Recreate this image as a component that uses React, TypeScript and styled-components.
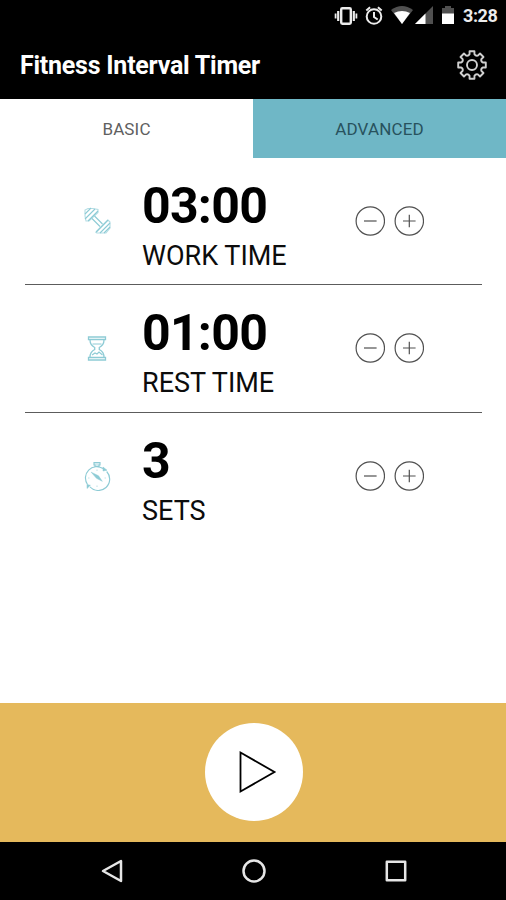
import React from 'react';
import styled, { createGlobalStyle } from 'styled-components';

const GlobalStyle = createGlobalStyle`
  * { box-sizing: border-box; }
  body { margin: 0; background: #fff; }
  button { border: 0; padding: 0; margin: 0; background: none; font: inherit; color: inherit; }
  svg { display: block; flex: none; }
`;

const Screen = styled.div`
  width: 506px;
  height: 900px;
  display: flex;
  flex-direction: column;
  overflow: hidden;
  background: #fff;
  font-family: Roboto, 'Liberation Sans', sans-serif;
  color: #000;
`;

const StatusBar = styled.div`
  height: 32px;
  flex: none;
  display: flex;
  justify-content: flex-end;
  align-items: center;
  padding-right: 9px;
  background: #000;
  color: #ececec;
`;

const Clock = styled.span`
  width: 34px;
  margin-left: 7px;
  font-size: 18px;
  line-height: 32px;
  font-weight: 700;
  letter-spacing: -0.4px;
  white-space: nowrap;
`;

const AppBar = styled.header`
  height: 67px;
  flex: none;
  display: flex;
  align-items: center;
  justify-content: space-between;
  padding: 0 18px 2px 20px;
  background: #000;
  color: #fff;
`;

const Title = styled.h1`
  margin: 2px 0 0;
  font-size: 25px;
  line-height: 30px;
  font-weight: 700;
  letter-spacing: -0.24px;
  white-space: nowrap;
`;

const Tabs = styled.nav`
  display: flex;
  height: 59px;
  flex: none;
`;

const Tab = styled.button<{ $filled?: boolean }>`
  flex: 1;
  font-size: 17px;
  line-height: 20px;
  letter-spacing: 0.15px;
  color: ${(p) => (p.$filled ? '#28525d' : '#606060')};
  background: ${(p) => (p.$filled ? '#6fb7c6' : '#fff')};
`;

const Settings = styled.main`
  flex: 1;
  padding: 0 24px 0 25px;
`;

const SettingRow = styled.section`
  height: 128px;
  display: grid;
  grid-template-columns: 117px 213px 1fr;
  border-bottom: 1px solid #5c5c5c;
  &:first-child { height: 127px; }
  &:last-child { border-bottom-color: transparent; }
`;

const IconCell = styled.div`
  padding: 48px 0 0 57px;
  color: #8dcbd5;
`;

const Reading = styled.div`
  padding-top: 19px;
`;

const Value = styled.div`
  font-size: 50px;
  line-height: 58px;
  font-weight: 700;
  letter-spacing: -0.75px;
`;

const Label = styled.div`
  margin-top: 4px;
  font-size: 27px;
  line-height: 34px;
  font-weight: 400;
  color: #0c0c0c;
  white-space: nowrap;
`;

const Stepper = styled.div`
  display: flex;
  gap: 9px;
  padding-top: 48px;
  align-items: flex-start;
  color: #505050;
`;

const StartPanel = styled.div`
  height: 139px;
  flex: none;
  display: flex;
  align-items: center;
  justify-content: center;
  padding: 0 0 1px 1px;
  background: #e5b95c;
`;

const PlayButton = styled.button`
  width: 98px;
  height: 98px;
  border-radius: 50%;
  background: #fff;
  display: flex;
  align-items: center;
  justify-content: center;
`;

const NavBar = styled.footer`
  height: 58px;
  flex: none;
  display: grid;
  grid-template-columns: repeat(3, 142px);
  justify-content: center;
  justify-items: center;
  align-items: center;
  padding-left: 1px;
  background: #000;
  color: #e6e6e6;
`;

const StatusIcons = () => (
  <svg width="122" height="32" viewBox="334 0 122 32" fill="none">
    <g stroke="#ececec">
      <rect x="341.2" y="8.2" width="9.6" height="15.6" rx="1.2" strokeWidth="2.4" />
      <path d="M338.2 11v10M353.8 11v10" strokeWidth="2.2" />
      <path d="M335.6 13.5v5M356.4 13.5v5" strokeWidth="1.8" />
      <circle cx="374" cy="16.5" r="7.3" strokeWidth="2" />
      <path d="M374 12v5l3.7 2.5M366.3 10.5l3.8-3.2M381.7 10.5l-3.8-3.2" strokeWidth="2" />
    </g>
    <path d="M391 10q11-8 22 0L402 24z" fill="#505050" />
    <path d="M394 13q8-4 16 0l-8 11z" fill="#fff" />
    <path d="M433 6v18h-18z" fill="#505050" />
    <path d="M425.5 13.5V24H415z" fill="#fff" />
    <path d="M442 8h3V6h6v2h3v6h-12z" fill="#505050" />
    <path d="M442 13.5h12V24h-12z" fill="#fff" />
  </svg>
);

const GEAR_TEETH = 8;

const gearPath = Array.from({ length: GEAR_TEETH }, (_, i) => {
  const point = (deg: number, r: number) => {
    const a = ((i * 360) / GEAR_TEETH + deg - 90) * (Math.PI / 180);
    return `${(16 + r * Math.cos(a)).toFixed(2)} ${(16 + r * Math.sin(a)).toFixed(2)}`;
  };
  return `${i ? 'L' : 'M'}${point(-10, 14)}L${point(10, 14)}L${point(13, 11)}Q${point(22.5, 9.5)} ${point(32, 11)}`;
}).join('') + 'Z';

const GearIcon = () => (
  <svg width="32" height="32" viewBox="0 0 32 32" fill="none" stroke="#d0d0d0" strokeWidth="1.9" strokeLinejoin="round">
    <path d={gearPath} />
    <circle cx="16" cy="16" r="5" />
  </svg>
);

const DumbbellIcon = () => (
  <svg width="30" height="30" viewBox="0 0 30 30" fill="none" stroke="currentColor" strokeWidth="1.1">
    <path d="M3 10V4l3-1.5h5l5 1v3L7 15H4zM14 26.5l12-12.5 2 2v6l-4 5h-9z" strokeOpacity=".65" />
    <path d="M3 8l6-6M3 13L13 3M6 15L16 5M14 26l12-12M18 27l10-10M22 27l6-6M12.5 10l8 8M10 12.5l8 8" />
  </svg>
);

const HourglassIcon = () => (
  <svg width="30" height="30" viewBox="0 0 30 30" fill="none" stroke="currentColor" strokeWidth="1.3">
    <path d="M6.5 4h17v2.5h-17zM6.5 24.5h17V27h-17zM8 7q0 5 4.7 7.5v2Q8 19 8 24M22 7q0 5-4.7 7.5v2Q22 19 22 24" />
    <path d="M10.5 11h9M10 22l3-2 2 1 2-2 3.5 3" strokeWidth="1.1" />
  </svg>
);

const StopwatchIcon = () => (
  <svg width="30" height="30" viewBox="0 0 30 30" fill="none" stroke="currentColor" strokeWidth="1.15">
    <path d="M5.5 23.5A11.3 11.3 0 0 1 21 7.6M24.7 10.5A11.3 11.3 0 0 1 8 25.8" />
    <path d="M13 5.5V4h-1V1.5h6V4h-1v1.5z" fill="currentColor" fillOpacity=".4" />
    <path d="M21 6l4 3.2-4 .8zM5 27.5v-4l3.4.8z" fill="currentColor" strokeWidth=".5" />
    <path d="M9.2 11.2l7.3 3.6 3.8 5.5-5.8-3z" fill="currentColor" strokeWidth=".5" />
    <path d="M15 8.5V10M24 17h-1.5M6 17h1.5M15 26v-1.5" strokeOpacity=".5" />
  </svg>
);

const StepIcon = ({ plus = false }: { plus?: boolean }) => (
  <svg width="30" height="30" viewBox="0 0 30 30" fill="none" stroke="currentColor" strokeWidth="1.2">
    <circle cx="15.3" cy="15" r="14.2" />
    <path d={plus ? 'M9 15h12.6M15.3 8.7v12.6' : 'M9 15h12.6'} />
  </svg>
);

const rows = [
  { value: '03:00', label: 'WORK TIME', Icon: DumbbellIcon },
  { value: '01:00', label: 'REST TIME', Icon: HourglassIcon },
  { value: '3', label: 'SETS', Icon: StopwatchIcon },
];

export default function App() {
  return (
    <>
      <GlobalStyle />
      <Screen>
        <StatusBar>
          <StatusIcons />
          <Clock>3:28</Clock>
        </StatusBar>
        <AppBar>
          <Title>Fitness Interval Timer</Title>
          <button aria-label="Settings"><GearIcon /></button>
        </AppBar>
        <Tabs>
          <Tab>BASIC</Tab>
          <Tab $filled>ADVANCED</Tab>
        </Tabs>
        <Settings>
          {rows.map(({ value, label, Icon }) => (
            <SettingRow key={label}>
              <IconCell><Icon /></IconCell>
              <Reading>
                <Value>{value}</Value>
                <Label>{label}</Label>
              </Reading>
              <Stepper>
                <button aria-label={`Decrease ${label}`}><StepIcon /></button>
                <button aria-label={`Increase ${label}`}><StepIcon plus /></button>
              </Stepper>
            </SettingRow>
          ))}
        </Settings>
        <StartPanel>
          <PlayButton aria-label="Start">
            <svg width="98" height="98" viewBox="0 0 98 98" fill="none" stroke="#000" strokeWidth="1.8">
              <path d="M35.5 29.5v39L69.5 49z" />
            </svg>
          </PlayButton>
        </StartPanel>
        <NavBar>
          <svg width="24" height="26" viewBox="0 0 24 26" fill="none" stroke="currentColor" strokeWidth="2.5" strokeLinejoin="round">
            <path d="M21 3v20L3 13z" />
          </svg>
          <svg width="26" height="26" viewBox="0 0 26 26" fill="none" stroke="currentColor" strokeWidth="2.5">
            <circle cx="13" cy="13" r="10.5" />
          </svg>
          <svg width="24" height="24" viewBox="0 0 24 24" fill="none" stroke="currentColor" strokeWidth="2.5" strokeLinejoin="round">
            <rect x="2.8" y="2.8" width="18.4" height="18.4" />
          </svg>
        </NavBar>
      </Screen>
    </>
  );
}
